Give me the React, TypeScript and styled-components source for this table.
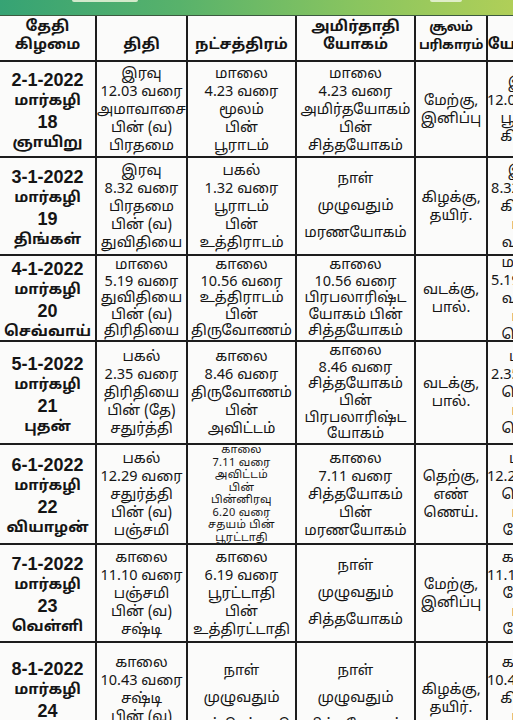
import React from "react";
import styled, { createGlobalStyle } from "styled-components";

const Global = createGlobalStyle`
  html, body { margin: 0; padding: 0; background: #fbfbfa; }
  body { width: 513px; height: 720px; overflow: hidden; }
  #root { width: 513px; height: 720px; overflow: hidden; }
`;

const Page = styled.div`
  width: 513px;
  height: 720px;
  overflow: hidden;
  background: #fbfbfa;
  font-family: "Noto Sans Tamil", "Lohit Tamil", "Noto Sans", "Liberation Sans", sans-serif;
  color: #151515;
`;

const Band = styled.div`
  position: relative;
  height: 15px;
  background: linear-gradient(90deg, #36a374 0%, #58b26b 35%, #8ac55f 70%, #b0cf58 100%);
  border-bottom: 1px solid #3c5a40;
`;

const Tab = styled.div<{ $left: number; $width: number }>`
  position: absolute;
  top: 0;
  left: ${(p) => p.$left}px;
  width: ${(p) => p.$width}px;
  height: 2px;
  background: rgba(235, 245, 220, 0.85);
  border-radius: 0 0 2px 2px;
`;

const Grid = styled.div<{ $rows: string }>`
  display: grid;
  width: 570px;
  grid-template-columns: 97px 91px 109px 119px 72px 82px;
  grid-template-rows: ${(p) => p.$rows};
`;

const CellBase = styled.div`
  display: flex;
  flex-direction: column;
  align-items: center;
  justify-content: center;
  text-align: center;
  overflow: hidden;
  border-right: 2px solid #1d1d1d;
  border-bottom: 2px solid #1d1d1d;
  box-sizing: border-box;
`;

const Lines = styled.div`
  white-space: pre;
`;

const HeadCell = styled(CellBase)<{ $narrow?: boolean }>`
  justify-content: flex-end;
  font-size: ${(p) => (p.$narrow ? 13 : 15)}px;
  letter-spacing: ${(p) => (p.$narrow ? "-0.4px" : "0")};
  font-weight: 700;
  line-height: 18px;
  padding-bottom: 5px;
`;

const DateCell = styled(CellBase)`
  font-weight: 700;
  line-height: 21px;
  padding-top: 6px;
`;

const DateNum = styled.div`
  font-family: "Liberation Sans", "Noto Sans", sans-serif;
  font-size: 18px;
`;

const DayTamil = styled.div`
  font-family: "Noto Sans Tamil", "Lohit Tamil", "Noto Sans", sans-serif;
  font-size: 15px;
`;

const Cell = styled(CellBase)<{ $size?: "small" | "spread" | "tight" }>`
  font-size: ${(p) => (p.$size === "small" ? 11 : 14.5)}px;
  line-height: ${(p) =>
    p.$size === "small" ? 12.5 : p.$size === "spread" ? 27 : p.$size === "tight" ? 16.6 : 18}px;
  letter-spacing: ${(p) => (p.$size === "small" ? "0.3px" : "0")};
  padding-top: ${(p) => (p.$size === "small" ? 0 : 1)}px;
`;

type Size = "small" | "spread" | "tight" | undefined;

type RowData = {
  h: number;
  date: string;
  month: string;
  day: string;
  weekday: string;
  thithi: string;
  thithiSize?: Size;
  star: string;
  starSize?: Size;
  yogam: string;
  yogamSize?: Size;
  soolam: string;
  last: string;
};

const rows: RowData[] = [
  {
    h: 96,
    date: "2-1-2022",
    month: "மார்கழி",
    day: "18",
    weekday: "ஞாயிறு",
    thithi: "இரவு\n12.03 வரை\nஅமாவாசை\nபின் (வ)\nபிரதமை",
    star: "மாலை\n4.23 வரை\nமூலம்\nபின்\nபூராடம்",
    yogam: "மாலை\n4.23 வரை\nஅமிர்தயோகம்\nபின்\nசித்தயோகம்",
    soolam: "மேற்கு,\nஇனிப்பு",
    last: "இரவு\n12.03 வரை\nபூராடம்\nகிழக்கு",
  },
  {
    h: 98,
    date: "3-1-2022",
    month: "மார்கழி",
    day: "19",
    weekday: "திங்கள்",
    thithi: "இரவு\n8.32 வரை\nபிரதமை\nபின் (வ)\nதுவிதியை",
    star: "பகல்\n1.32 வரை\nபூராடம்\nபின்\nஉத்திராடம்",
    yogam: "நாள்\nமுழுவதும்\nமரணயோகம்",
    yogamSize: "spread",
    soolam: "கிழக்கு,\nதயிர்.",
    last: "இரவு\n8.32 வரை\nகிழக்கு\nபின்\nவடக்கு",
  },
  {
    h: 86,
    date: "4-1-2022",
    month: "மார்கழி",
    day: "20",
    weekday: "செவ்வாய்",
    thithi: "மாலை\n5.19 வரை\nதுவிதியை\nபின் (வ)\nதிரிதியை",
    thithiSize: "tight",
    star: "காலை\n10.56 வரை\nஉத்திராடம்\nபின்\nதிருவோணம்",
    starSize: "tight",
    yogam: "காலை\n10.56 வரை\nபிரபலாரிஷ்ட\nயோகம் பின்\nசித்தயோகம்",
    yogamSize: "tight",
    soolam: "வடக்கு,\nபால்.",
    last: "மாலை\n5.19 வரை\nவடக்கு\nபின்\nதெற்கு",
  },
  {
    h: 103,
    date: "5-1-2022",
    month: "மார்கழி",
    day: "21",
    weekday: "புதன்",
    thithi: "பகல்\n2.35 வரை\nதிரிதியை\nபின் (தே)\nசதுர்த்தி",
    star: "காலை\n8.46 வரை\nதிருவோணம்\nபின்\nஅவிட்டம்",
    yogam: "காலை\n8.46 வரை\nசித்தயோகம்\nபின்\nபிரபலாரிஷ்ட\nயோகம்",
    yogamSize: "tight",
    soolam: "வடக்கு,\nபால்.",
    last: "பகல்\n2.35 வரை\nதெற்கு\nபின்\nதெற்கு",
  },
  {
    h: 100,
    date: "6-1-2022",
    month: "மார்கழி",
    day: "22",
    weekday: "வியாழன்",
    thithi: "பகல்\n12.29 வரை\nசதுர்த்தி\nபின் (வ)\nபஞ்சமி",
    star: "காலை\n7.11 வரை\nஅவிட்டம்\nபின்\nபின்னிரவு\n6.20 வரை\nசதயம் பின்\nபூரட்டாதி",
    starSize: "small",
    yogam: "காலை\n7.11 வரை\nசித்தயோகம்\nபின்\nமரணயோகம்",
    soolam: "தெற்கு,\nஎண்\nணெய்.",
    last: "பகல்\n12.29 வரை\nதெற்கு\nபின்\nமேற்கு",
  },
  {
    h: 98,
    date: "7-1-2022",
    month: "மார்கழி",
    day: "23",
    weekday: "வெள்ளி",
    thithi: "காலை\n11.10 வரை\nபஞ்சமி\nபின் (வ)\nசஷ்டி",
    star: "காலை\n6.19 வரை\nபூரட்டாதி\nபின்\nஉத்திரட்டாதி",
    yogam: "நாள்\nமுழுவதும்\nசித்தயோகம்",
    yogamSize: "spread",
    soolam: "மேற்கு,\nஇனிப்பு",
    last: "காலை\n11.10 வரை\nமேற்கு\nபின்\nமேற்கு",
  },
  {
    h: 112,
    date: "8-1-2022",
    month: "மார்கழி",
    day: "24",
    weekday: "சனி",
    thithi: "காலை\n10.43 வரை\nசஷ்டி\nபின் (வ)\nசப்தமி",
    star: "நாள்\nமுழுவதும்\nஉத்திரட்டாதி",
    starSize: "spread",
    yogam: "நாள்\nமுழுவதும்\nசித்தயோகம்",
    yogamSize: "spread",
    soolam: "கிழக்கு,\nதயிர்.",
    last: "காலை\n10.43 வரை\nகிழக்கு\nபின்\nகிழக்கு",
  },
];

export default function App() {
  const template = ["46px", ...rows.map((r) => `${r.h}px`)].join(" ");
  return (
    <Page>
      <Global />
      <Band>
        <Tab $left={72} $width={66} />
        <Tab $left={430} $width={32} />
      </Band>
      <Grid $rows={template}>
        <HeadCell><Lines>{"தேதி\nகிழமை"}</Lines></HeadCell>
        <HeadCell><Lines>திதி</Lines></HeadCell>
        <HeadCell><Lines>நட்சத்திரம்</Lines></HeadCell>
        <HeadCell><Lines>{"அமிர்தாதி\nயோகம்"}</Lines></HeadCell>
        <HeadCell $narrow><Lines>{"சூலம்\nபரிகாரம்"}</Lines></HeadCell>
        <HeadCell><Lines>யோகினி</Lines></HeadCell>
        {rows.map((r) => (
          <React.Fragment key={r.date}>
            <DateCell>
              <DateNum>{r.date}</DateNum>
              <DayTamil>{r.month}</DayTamil>
              <DateNum>{r.day}</DateNum>
              <DayTamil>{r.weekday}</DayTamil>
            </DateCell>
            <Cell $size={r.thithiSize}><Lines>{r.thithi}</Lines></Cell>
            <Cell $size={r.starSize}><Lines>{r.star}</Lines></Cell>
            <Cell $size={r.yogamSize}><Lines>{r.yogam}</Lines></Cell>
            <Cell><Lines>{r.soolam}</Lines></Cell>
            <Cell><Lines>{r.last}</Lines></Cell>
          </React.Fragment>
        ))}
      </Grid>
    </Page>
  );
}
